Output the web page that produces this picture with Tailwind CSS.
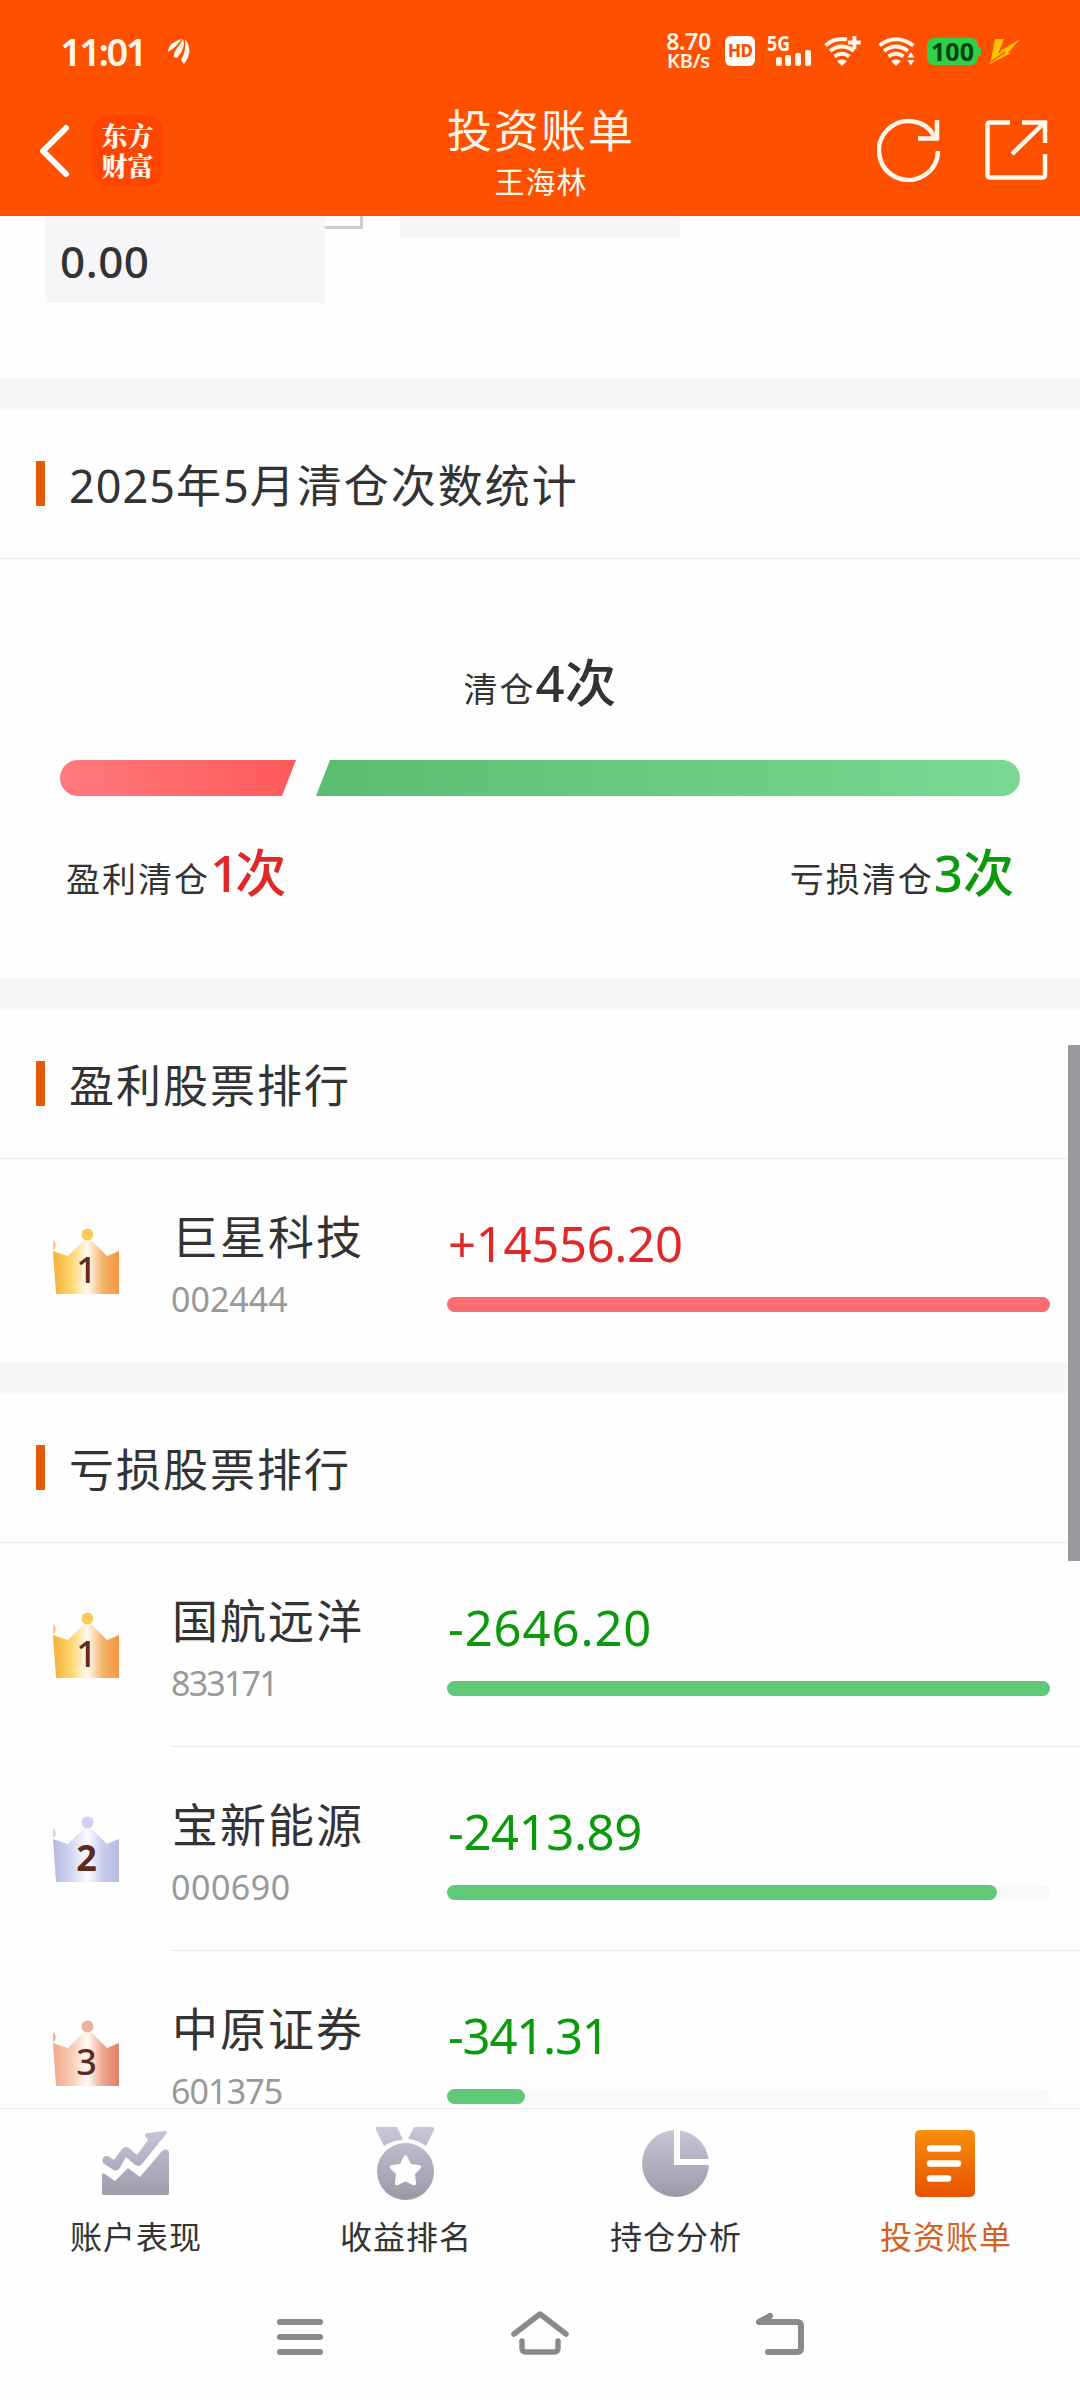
<!DOCTYPE html>
<html lang="zh-CN">
  <head>
    <meta charset="UTF-8" />
    <meta name="viewport" content="width=device-width, initial-scale=1.0" />
    <title>投资账单</title>
    <script src="https://cdn.jsdelivr.net/npm/@tailwindcss/browser@4"></script>
  </head>
  <body class="bg-white">
    <div class="relative w-[1080px] h-[2400px] overflow-hidden flex flex-col bg-[#fefefe] text-[#333] font-['Noto_Sans','Noto_Sans_CJK_SC',sans-serif]">
      <!-- header -->
      <header class="h-[216px] shrink-0 bg-[#ff5000] text-[#fff6ec]">
        <div class="h-[100px] pl-[60px] pr-[60px] pt-[2px] flex items-center">
          <span class="text-[38px] leading-[50px] font-semibold w-[88px] whitespace-nowrap tracking-[-2.5px]">11:01</span>
          <svg class="ml-[20px] w-[22px] h-[25px]" viewBox="0 0 22 25" fill="currentColor">
            <path d="M0 13C0 6 6 2 14 0C10 5 6 10 0 13Z" />
            <path d="M6 18C5 12 12 7 15 0C18 7 13 15 9 19Z" />
            <path d="M13 21C17 14 18 8 17 0C24 8 22 18 16 25Z" />
          </svg>
          <div class="ml-[475px] w-[48px] flex flex-col items-center font-semibold whitespace-nowrap">
            <div class="text-[23px] leading-[20px] tracking-[-0.3px]">8.70</div>
            <div class="text-[20px] leading-[20px] tracking-[-0.3px]">KB/s</div>
          </div>
          <div class="ml-[13px] w-[30px] h-[30px] rounded-[6px] bg-white text-[#ff5000] text-[17px] leading-[30px] font-extrabold text-center tracking-[-0.5px]">HD</div>
          <svg class="ml-[12px] w-[44px] h-[30px] overflow-visible" viewBox="0 0 44 30" fill="currentColor">
            <text x="0" y="15" font-size="21" font-weight="700" textLength="23" lengthAdjust="spacingAndGlyphs">5G</text>
            <rect x="9" y="21" width="6" height="9" rx="2" />
            <rect x="18" y="19" width="6" height="11" rx="2" />
            <rect x="28" y="17" width="6" height="13" rx="2" />
            <rect x="38" y="14" width="6" height="16" rx="2" />
          </svg>
          <svg class="ml-[13px] w-[37px] h-[30px]" viewBox="0 0 37 30" fill="none" stroke="currentColor" stroke-width="4">
            <path d="M1.500 9.500Q11 1 23 3.500" />
            <path d="M6 15Q18 6 30 15" />
            <path d="M10.500 20.500Q18 15 25.500 20.500" />
            <path d="M18 30L13 25Q18 21.500 23 25Z" fill="currentColor" stroke="none" />
            <path d="M24 6.500H37M30.500 0V13" />
          </svg>
          <svg class="ml-[17px] w-[37px] h-[30px]" viewBox="0 0 37 30" fill="none" stroke="currentColor" stroke-width="4">
            <path d="M1.500 9.500Q18 -3 35.500 9.500" />
            <path d="M6 15Q18 6 30 15" />
            <path d="M10.500 20.500Q18 15 25.500 20.500" />
            <path d="M18 30L13 25Q18 21.500 23 25Z" fill="currentColor" stroke="none" />
            <path d="M29.500 21.500L33 16L36.500 21.500ZM29.500 24L33 29.500L36.500 24Z" fill="currentColor" stroke="none" />
          </svg>
          <div class="ml-[12px] flex items-center">
            <div class="w-[51px] h-[27px] rounded-[7px] bg-[#2dd14b] text-[#04420d] text-[25px] leading-[27px] font-bold text-center">100</div>
            <div class="w-[3px] h-[9px] rounded-r-[3px] bg-[#2dd14b]"></div>
          </div>
          <svg class="ml-[9px] w-[30px] h-[25px] shrink-0" viewBox="0 0 30 25" fill="#ffc400">
            <path d="M5 0H14L10 12L30 0L18 14H21L0 25Z" />
            <path d="M15 0L9 14M1 23L15 13" stroke="#ff5000" stroke-width="1.500" />
          </svg>
        </div>
        <div class="h-[116px] grid grid-cols-[1fr_240px_1fr]">
          <div class="flex pl-[39px] pt-[15px]">
            <svg class="mt-[9px] w-[31px] h-[54px]" viewBox="0 0 31 54" fill="none" stroke="#fff" stroke-width="6" stroke-linecap="round" stroke-linejoin="round">
              <path d="M27 4L4 27L27 50" />
            </svg>
            <div class="ml-[22px] w-[71px] h-[71px] rounded-[16px] bg-[#ff4400] pt-[5px] text-center text-[26px] leading-[30px] font-black font-['Noto_Serif_CJK_SC','Noto_Sans_CJK_SC',serif]">
              <div>东方</div>
              <div>财富</div>
            </div>
          </div>
          <div class="text-center pl-[2px]">
            <h1 class="mt-[2px] text-[45px] leading-[58px] tracking-[2px]">投资账单</h1>
            <div class="text-[30px] leading-[44px] tracking-[1px]">王海林</div>
          </div>
          <div class="flex justify-end gap-[43px] pr-[32px] pt-[18px]">
            <svg class="w-[64px] h-[64px]" viewBox="0 0 64 64" fill="none" stroke="currentColor" stroke-width="4.500">
              <path d="M61 33A29.500 29.500 0 1 1 57.500 18.500" />
              <path d="M41 20.500H60M60 2V22.500" />
            </svg>
            <svg class="w-[64px] h-[64px]" viewBox="0 0 64 64" fill="none" stroke="currentColor" stroke-width="4.500">
              <path d="M26 4.500H6Q3.500 4.500 3.500 7V57Q3.500 59.500 6 59.500H58.500Q61 59.500 61 57V36" />
              <path d="M38 4.500H61V25M28 36L60 5" />
            </svg>
          </div>
        </div>
      </header>

      <!-- scrolling content -->
      <main class="h-[1892px] shrink-0 overflow-hidden">
        <section class="h-[163px] flex items-start pl-[46px]">
          <div class="w-[279px] h-[87px] bg-[#f6f6f9] pl-[14px] pt-[16px] text-[44px] leading-[58px] font-medium tracking-[0.5px]">0.00</div>
          <div class="w-[38px] h-[13px] border-r-3 border-b-3 border-[#ccc]"></div>
          <div class="ml-[37px] w-[280px] h-[21px] bg-[#f6f6f9]"></div>
        </section>

        <section class="h-[600px] border-t-30 border-[#f7f7f7]">
          <div class="h-[150px] border-b border-[#ebebeb] pl-[36px] pt-[52px] flex">
            <span class="w-[9px] h-[45px] bg-[#e65a05]"></span>
            <h2 class="ml-[24px] text-[45px] leading-[50px] tracking-[2px]"><span class="tracking-[1px]">2025</span>年<span class="tracking-[1px]">5</span>月清仓次数统计</h2>
          </div>
          <div class="pt-[88px] text-center text-[34px] leading-[70px] tracking-[2px]">清仓<span class="text-[51px] font-medium tracking-[0.5px]">4次</span></div>
          <svg class="mt-[36px] ml-[60px] w-[960px] h-[36px]" viewBox="0 0 960 36">
            <defs>
              <linearGradient id="win"><stop stop-color="#ff7a7f" /><stop offset="1" stop-color="#ff5a5a" /></linearGradient>
              <linearGradient id="lose"><stop stop-color="#5bbd70" /><stop offset="1" stop-color="#7ad892" /></linearGradient>
            </defs>
            <path fill="url(#win)" d="M18 0H236L222 36H18A18 18 0 0 1 18 0Z" />
            <path fill="url(#lose)" d="M270 0H942A18 18 0 0 1 942 36H256Z" />
          </svg>
          <div class="mt-[38px] px-[66px] flex justify-between text-[34px] leading-[76px] tracking-[2px]">
            <div>盈利清仓<span class="text-[51px] font-medium tracking-normal text-[#e02828]"><span class="tracking-[-4px]">1</span>次</span></div>
            <div>亏损清仓<span class="text-[51px] font-medium tracking-normal text-[#0b9a0b]">3次</span></div>
          </div>
        </section>

        <section class="h-[384px] border-t-30 border-[#f7f7f7]">
          <div class="h-[150px] border-b border-[#ebebeb] pl-[36px] pt-[52px] flex">
            <span class="w-[9px] h-[45px] bg-[#e65a05]"></span>
            <h2 class="ml-[24px] text-[45px] leading-[50px] tracking-[2px]">盈利股票排行</h2>
          </div>
          <div id="winList"></div>
        </section>

        <section class="border-t-30 border-[#f7f7f7]">
          <div class="h-[150px] border-b border-[#ebebeb] pl-[36px] pt-[52px] flex">
            <span class="w-[9px] h-[45px] bg-[#e65a05]"></span>
            <h2 class="ml-[24px] text-[45px] leading-[50px] tracking-[2px]">亏损股票排行</h2>
          </div>
          <div id="loseList"></div>
        </section>
      </main>

      <!-- tab bar -->
      <nav class="h-[180px] shrink-0 border-t border-[#ebebeb] bg-[#fefefe] grid grid-cols-4 text-[32px] leading-[44px] tracking-[1px] text-center">
        <div class="pt-[18px] flex flex-col items-center">
          <svg class="w-[72px] h-[74px]" viewBox="0 0 72 74">
            <defs><linearGradient id="tab" gradientUnits="userSpaceOnUse" x1="0" y1="0" x2="0" y2="72"><stop stop-color="#c9c7d8" /><stop offset="1" stop-color="#9b99a8" /></linearGradient></defs>
            <path fill="url(#tab)" d="M3 49Q3 45 6 47L16 54L29 41L41 50L63 24Q70 20 70 27V66Q70 68 68 68H5Q3 68 3 66Z" />
            <path fill="url(#tab)" d="M4 36Q2 28 9 29L15 33L23 22Q27 18 31 22L38 28L49 13L46 9Q45 6 50 6L65 4Q69 3 67 7L43 37Q39 41 35 37L27 30L20 42Q16 45 13 42Z" />
          </svg>
          <span class="mt-[14px] pl-[2px]">账户表现</span>
        </div>
        <div class="pt-[18px] flex flex-col items-center">
          <svg class="w-[72px] h-[74px]" viewBox="0 0 72 74" fill="url(#tab)">
            <path d="M8 0H28L34 13Q24 13 15 19L7 3Q6 0 8 0ZM46 0H63Q66 0 65 3L57 19Q49 13 39 12L44 2Q45 0 46 0Z" />
            <path fill-rule="evenodd" d="M36.500 16A28.500 28.500 0 1 1 36.500 73A28.500 28.500 0 1 1 36.500 16ZM36.500 28Q35 28 34 31L31 37L23 38Q19 39 22 42L27 47L26 56Q26 59 29 58L36.500 54.500L44 58Q47 59 47 56L46 47L51 42Q54 39 50 38L42 37L39 31Q38 28 36.500 28Z" />
          </svg>
          <span class="mt-[14px] pl-[2px]">收益排名</span>
        </div>
        <div class="pt-[18px] flex flex-col items-center">
          <svg class="w-[72px] h-[74px]" viewBox="0 0 72 74" fill="url(#tab)">
            <path d="M35 3V38H70A33.500 33.500 0 1 1 35 3Z" />
            <path d="M41 3.500V32H69.500A33 33 0 0 0 41 3.500Z" />
          </svg>
          <span class="mt-[14px] pl-[2px]">持仓分析</span>
        </div>
        <div class="pt-[18px] flex flex-col items-center text-[#d5601f]">
          <svg class="w-[72px] h-[74px]" viewBox="0 0 72 74">
            <defs><linearGradient id="on" x1="0" y1="0" x2="0" y2="1"><stop stop-color="#f78f0a" /><stop offset="1" stop-color="#e85200" /></linearGradient></defs>
            <rect x="6" y="3" width="60" height="67" rx="5" fill="url(#on)" />
            <path d="M21 21.500H49M21 36.500H49M21 51.500H39" stroke="#fff" stroke-width="6.500" stroke-linecap="round" />
          </svg>
          <span class="mt-[14px] pl-[2px]">投资账单</span>
        </div>
      </nav>

      <!-- system navigation -->
      <div class="h-[112px] flex items-start justify-center gap-[180px] pt-[19px]">
        <svg class="w-[60px] h-[56px]" viewBox="0 0 60 56" stroke="#8a8a8a" stroke-width="6" stroke-linecap="round">
          <path d="M10 15H50M10 30H50M10 45H50" />
        </svg>
        <svg class="w-[60px] h-[56px]" viewBox="0 0 60 56" fill="none" stroke="#8a8a8a" stroke-width="5.500" stroke-linecap="round" stroke-linejoin="round">
          <path d="M4 27L30 7L56 27M12 34V41Q12 45 16 45H44Q48 45 48 41V34" />
        </svg>
        <svg class="w-[60px] h-[56px]" viewBox="0 0 60 56" fill="none" stroke="#8a8a8a" stroke-width="6" stroke-linecap="round" stroke-linejoin="round">
          <path d="M20 9L9 15H47Q51 15 51 19V41Q51 45 47 45H18" />
        </svg>
      </div>

      <!-- scrollbar thumb -->
      <div class="absolute right-0 top-[1045px] w-[12px] h-[516px] bg-[#9b9aa0]"></div>
    </div>

    <svg class="absolute w-0 h-0">
      <defs>
        <linearGradient id="crown1"><stop stop-color="#f7b03c" /><stop offset=".27" stop-color="#fbd56a" /><stop offset=".52" stop-color="#fffaf0" /><stop offset=".76" stop-color="#f6b26a" /><stop offset="1" stop-color="#f2963f" /></linearGradient>
        <linearGradient id="crown2"><stop stop-color="#b3b9e2" /><stop offset=".27" stop-color="#d3d6f0" /><stop offset=".52" stop-color="#fcfcff" /><stop offset=".76" stop-color="#c6caec" /><stop offset="1" stop-color="#b9bce4" /></linearGradient>
        <linearGradient id="crown3"><stop stop-color="#f0a98a" /><stop offset=".27" stop-color="#f8c8b0" /><stop offset=".52" stop-color="#fffaf7" /><stop offset=".76" stop-color="#eea58c" /><stop offset="1" stop-color="#df8068" /></linearGradient>
      </defs>
    </svg>

    <script>
      const winners = [{ rank: 1, name: "巨星科技", code: "002444", amount: "+14556.20", percent: 100, codeSpacing: "", amountSpacing: "tracking-[-0.3px]" }];
      const losers = [
        { rank: 1, name: "国航远洋", code: "833171", amount: "-2646.20", percent: 100, codeSpacing: "tracking-[-1.8px]", amountSpacing: "tracking-[0.9px]" },
        { rank: 2, name: "宝新能源", code: "000690", amount: "-2413.89", percent: 91.2, codeSpacing: "tracking-[0.5px]", amountSpacing: "tracking-[-0.4px]" },
        { rank: 3, name: "中原证券", code: "601375", amount: "-341.31", percent: 12.9, codeSpacing: "tracking-[-0.9px]", amountSpacing: "tracking-[-1.2px]" },
      ];
      const ballColors = { 1: "#f9cb60", 2: "#d0d3ef", 3: "#efb09b" };

      function row(item, textColor, barColor) {
        return `
          <div class="h-[204px] flex group">
            <div class="w-[171px] pl-[53px] pt-[69px]">
              <svg class="w-[66px] h-[66px]" viewBox="0 0 66 66">
                <path fill="url(#crown${item.rank})" d="M0 23L15 28L32 11H37L54 28L66 23V66H3Z" />
                <circle cx="34.500" cy="6.500" r="6" fill="${ballColors[item.rank]}" />
                <path d="M0 12Q5 16 1 22H0Z" fill="${ballColors[item.rank]}" />
                <text x="33.500" y="55" font-size="36" font-weight="${item.rank === 2 ? 700 : 500}" text-anchor="middle" fill="#5c2a20">${item.rank}</text>
              </svg>
            </div>
            <div class="flex-1 flex border-b border-[#ebebeb] group-last:border-transparent">
              <div class="w-[276px]">
                <div class="pl-[1px] pt-[47px] text-[46px] leading-[60px] tracking-[2px]">${item.name}</div>
                <div class="pt-[13px] text-[34px] leading-[40px] text-[#999] ${item.codeSpacing}">${item.code}</div>
              </div>
              <div class="w-[603px] pt-[54px]">
                <div class="pl-[1px] text-[49px] leading-[60px] ${textColor} ${item.amountSpacing}">${item.amount}</div>
                <div class="mt-[24px] h-[15px] rounded-full bg-[#f7f8fa]">
                  <div class="h-full rounded-full ${barColor}" style="width: ${item.percent}%"></div>
                </div>
              </div>
            </div>
          </div>`;
      }

      document.getElementById("winList").innerHTML = winners.map((item) => row(item, "text-[#e02828]", "bg-[#fb6d70]")).join("");
      document.getElementById("loseList").innerHTML = losers.map((item) => row(item, "text-[#0b9a0b]", "bg-[#5fc978]")).join("");
    </script>
  </body>
</html>
